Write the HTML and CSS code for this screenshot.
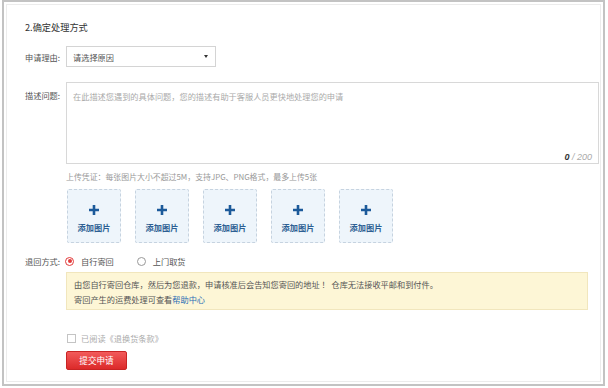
FILE: index.html
```html
<!DOCTYPE html>
<html lang="zh-CN">
<head>
<meta charset="utf-8">
<link rel="stylesheet" href="styles.css">
</head>
<body>
<div class="frame">
  <div class="title">2.确定处理方式</div>

  <div class="row row-reason">
    <div class="label">申请理由:</div>
    <div class="select">
      <span>请选择原因</span>
      <span class="caret"></span>
    </div>
  </div>

  <div class="row row-desc">
    <div class="label label-top">描述问题:</div>
    <div class="textarea-wrap">
      <textarea class="textarea" placeholder="在此描述您遇到的具体问题，您的描述有助于客服人员更快地处理您的申请"></textarea>
      <div class="counter"><b>0</b> / 200</div>
    </div>
  </div>

  <div class="hint">上传凭证：每张图片大小不超过5M，支持JPG、PNG格式，最多上传5张</div>

  <div class="uploads">
    <div class="upload"><svg class="plus" viewBox="0 0 10 10"><path d="M5 0v10M0 5h10"/></svg><span>添加图片</span></div>
    <div class="upload"><svg class="plus" viewBox="0 0 10 10"><path d="M5 0v10M0 5h10"/></svg><span>添加图片</span></div>
    <div class="upload"><svg class="plus" viewBox="0 0 10 10"><path d="M5 0v10M0 5h10"/></svg><span>添加图片</span></div>
    <div class="upload"><svg class="plus" viewBox="0 0 10 10"><path d="M5 0v10M0 5h10"/></svg><span>添加图片</span></div>
    <div class="upload"><svg class="plus" viewBox="0 0 10 10"><path d="M5 0v10M0 5h10"/></svg><span>添加图片</span></div>
  </div>

  <div class="row row-return">
    <div class="label">退回方式:</div>
    <div class="radios">
      <span class="radio checked"></span><span class="radio-text">自行寄回</span>
      <span class="radio"></span><span class="radio-text">上门取货</span>
    </div>
  </div>

  <div class="notice">
    <p>由您自行寄回仓库，然后为您退款，申请核准后会告知您寄回的地址 ！ 仓库无法接收平邮和到付件。</p>
    <p>寄回产生的运费处理可查看<a class="link">帮助中心</a></p>
  </div>

  <div class="agree">
    <span class="checkbox"></span><span class="agree-text">已阅读《退换货条款》</span>
  </div>

  <button class="submit">提交申请</button>
</div>
</body>
</html>
```

FILE: styles.css
```css
* { box-sizing: border-box; }
html, body { margin: 0; padding: 0; background: #fff; }
body {
  font-family: "Noto Sans CJK SC", "Liberation Sans", sans-serif;
  font-size: 8.2px;
  color: #666;
}
.frame {
  margin-left: 2px;
  width: 603px;
  height: 386px;
  border: 2px solid #c3c3c3;
  box-shadow: inset 0 0 0 2px #fff, inset 0 0 0 3px #ececec;
  padding: 18px 0 0 21px;
}
.title {
  height: 14px;
  line-height: 14px;
  font-size: 9.2px;
  color: #333;
}
.row { display: flex; }
.label {
  width: 41px;
  flex: none;
  color: #555;
}
.row-reason { margin-top: 12px; height: 21px; align-items: center; }
.select {
  width: 150px;
  height: 21px;
  border: 1px solid #d4d4d4;
  display: flex;
  align-items: center;
  justify-content: space-between;
  padding: 0 7px 0 6px;
  color: #555;
}
.caret {
  width: 0; height: 0;
  border-left: 2.5px solid transparent;
  border-right: 2.5px solid transparent;
  border-top: 3px solid #333;
}
.row-desc { margin-top: 15px; }
.label-top { padding-top: 7px; line-height: 12px; }
.textarea-wrap {
  position: relative;
  width: 533px;
  height: 82px;
}
.textarea {
  display: block;
  width: 100%;
  height: 100%;
  border: 1px solid #d8d8d8;
  resize: none;
  padding: 7px 6px;
  font-family: inherit;
  font-size: 8.2px;
  line-height: 12px;
  color: #555;
  outline: none;
}
.textarea::placeholder { color: #aaa; }
.counter {
  position: absolute;
  right: 7px;
  bottom: 2px;
  font-style: italic;
  color: #aaa;
  font-size: 9px;
  font-family: "Liberation Sans", sans-serif;
}
.counter b { color: #333; }
.hint {
  margin: 7px 0 0 41px;
  line-height: 12px;
  color: #999;
  font-size: 7.9px;
}
.uploads {
  margin: 6px 0 0 42px;
  display: flex;
  gap: 14px;
}
.upload {
  width: 54px;
  height: 54px;
  background: #eef5fb;
  border: 1px dashed #c6d3e0;
  border-radius: 2px;
  display: flex;
  flex-direction: column;
  align-items: center;
  padding-top: 15px;
}
.plus {
  width: 10px;
  height: 10px;
  stroke: #1c5a9a;
  stroke-width: 2.6;
  fill: none;
}
.upload span {
  margin-top: 7px;
  font-weight: bold;
  color: #2d5f93;
  line-height: 11px;
}
.row-return { margin-top: 12px; line-height: 12px; align-items: center; }
.radios { display: flex; align-items: center; }
.radio {
  width: 9px;
  height: 9px;
  border: 1px solid #999;
  border-radius: 50%;
  position: relative;
}
.radio.checked { border-color: #e23b3b; margin-left: -1px; }
.radio.checked::after {
  content: "";
  position: absolute;
  left: 1.5px; top: 1.5px;
  width: 4px; height: 4px;
  border-radius: 50%;
  background: #e23b3b;
}
.radio-text { margin: 0 23px 0 7px; color: #555; }
.notice {
  margin: 5px 0 0 41px;
  width: 522px;
  height: 38px;
  background: #fdf6d6;
  border: 1px solid #f1e6bd;
  padding: 4px 7px 0;
  color: #555;
}
.notice p { margin: 0; line-height: 15px; }
.link { color: #2a6db5; }
.agree {
  margin: 22px 0 0 42px;
  display: flex;
  align-items: center;
  line-height: 12px;
}
.checkbox {
  width: 9px;
  height: 9px;
  border: 1px solid #c4c4c4;
  background: #fff;
}
.agree-text { margin-left: 5px; color: #aaa; }
.submit {
  display: block;
  margin: 7px 0 0 41px;
  width: 61px;
  height: 19px;
  border: 1px solid #c82424;
  border-radius: 2px;
  background: linear-gradient(#f25a5a, #dc2a2a);
  color: #fff;
  font-family: inherit;
  font-size: 8.6px;
  padding: 0;
  line-height: 17px;
}
```
